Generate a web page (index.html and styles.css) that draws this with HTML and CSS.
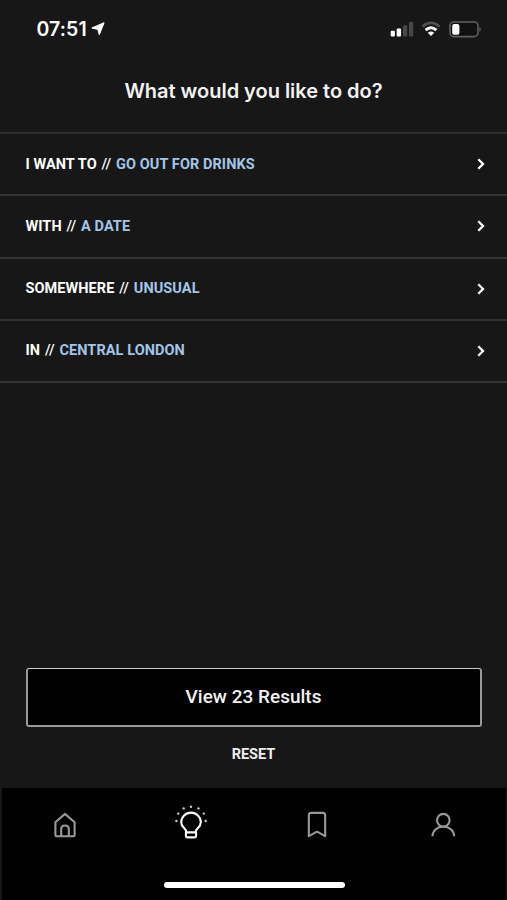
FILE: index.html
```html
<!DOCTYPE html>
<html lang="en">
<head>
<meta charset="utf-8">
<title>What would you like to do?</title>
<link rel="stylesheet" href="styles.css">
</head>
<body>
<div class="screen">
  <header class="status">
    <div class="clock"><span class="time">07:51</span>
      <svg class="arrow" width="14" height="14" viewBox="0 0 14 14"><path d="M13.1.7 8.3 12.8 6.8 7.4 .8 6Z" fill="#fff" stroke="#fff" stroke-width="1" stroke-linejoin="round"/></svg>
    </div>
    <div class="indicators">
      <svg width="24" height="16" viewBox="0 0 24 16"><g fill="#fff"><rect x=".7" y="9.8" width="4.2" height="5.7" rx="1"/><rect x="6.7" y="7.4" width="4.4" height="8.1" rx="1"/></g><g fill="#474747"><rect x="13" y="4.2" width="4.2" height="11.3" rx="1"/><rect x="19" y="1" width="4.2" height="14.5" rx="1"/></g></svg>
      <svg class="wifi" width="20" height="16" viewBox="0 0 20 16" fill="none"><path d="M1.5 5.4Q10-1.8 18.5 5.4" stroke="#505050" stroke-width="2.6"/><path d="M4.6 9.1Q10 4.3 15.4 9.1" stroke="#fff" stroke-width="2.8"/><path d="M6.8 11.8Q10 9 13.2 11.8L10 15Z" fill="#fff"/></svg>
      <svg width="33" height="17" viewBox="0 0 33 17"><rect x="1" y="1" width="28" height="14.6" rx="4" fill="#111" stroke="#606060" stroke-width="1.6"/><rect x="3.2" y="3" width="7.2" height="10.8" rx="2" fill="#fff"/><path d="M30.5 6Q33 8.3 30.5 10.7Z" fill="#707070"/></svg>
    </div>
  </header>
  <h1 class="title">What would you like to do?</h1>
  <ul class="filters">
    <li class="row"><span class="label">I WANT TO <span class="slash">//</span> <span class="value">GO OUT FOR DRINKS</span></span><svg class="chevron" viewBox="0 0 8 12"><path d="M1.3 1.3 6 6 1.3 10.7"/></svg></li>
    <li class="row"><span class="label">WITH <span class="slash">//</span> <span class="value">A DATE</span></span><svg class="chevron" viewBox="0 0 8 12"><path d="M1.3 1.3 6 6 1.3 10.7"/></svg></li>
    <li class="row"><span class="label">SOMEWHERE <span class="slash">//</span> <span class="value">UNUSUAL</span></span><svg class="chevron" viewBox="0 0 8 12"><path d="M1.3 1.3 6 6 1.3 10.7"/></svg></li>
    <li class="row"><span class="label">IN <span class="slash">//</span> <span class="value">CENTRAL LONDON</span></span><svg class="chevron" viewBox="0 0 8 12"><path d="M1.3 1.3 6 6 1.3 10.7"/></svg></li>
  </ul>
  <div class="actions">
    <button class="results">View 23 Results</button>
    <button class="reset">RESET</button>
  </div>
  <footer class="dock">
    <nav class="tabs">
      <a class="tab"><svg width="36" height="36" viewBox="0 0 36 36"><path d="M8.4 15.3 18 6.9l9.6 8.4v12.1q0 1.9-1.9 1.9H10.3q-1.9 0-1.9-1.9ZM14.2 29.1v-7q0-3.6 3.8-3.6t3.8 3.6v7"/></svg></a>
      <a class="tab active"><svg width="36" height="36" viewBox="0 0 36 36"><path d="M13.4 25.3C13.4 21.3 8.2 20.6 8.2 15.2a9.8 9.6 0 0 1 19.6 0c0 5.4-5.2 6.1-5.2 10.1M12.9 25.4h10.2v3q0 2-2 2h-6.2q-2 0-2-2Z"/><g class="rays"><circle cx="3.4" cy="14" r="1.2"/><circle cx="5.2" cy="6.6" r="1.2"/><circle cx="10.7" cy="1.4" r="1.2"/><circle cx="18" cy="-.3" r="1.2"/><circle cx="25.5" cy="1.4" r="1.2"/><circle cx="30.8" cy="6.6" r="1.2"/><circle cx="32.7" cy="14" r="1.2"/></g></svg></a>
      <a class="tab"><svg width="36" height="36" viewBox="0 0 36 36"><path d="M9.8 29.2V8.4q0-2.5 2.5-2.5h11.4q2.5 0 2.5 2.5v20.8L18 24.7Z"/></svg></a>
      <a class="tab"><svg width="36" height="36" viewBox="0 0 36 36"><circle cx="18.3" cy="13.2" r="6.3"/><path d="M7.4 29.2C7.8 23.4 12.3 19.6 18.3 19.6S28.8 23.4 29.2 29.2"/></svg></a>
    </nav>
    <div class="home-bar"></div>
  </footer>
</div>
</body>
</html>
```
FILE: styles.css
```css
* { box-sizing: border-box; }
body { margin: 0; background: #171717; color: #fff; font-family: Roboto, sans-serif; }
.screen { width: 507px; height: 900px; display: flex; flex-direction: column; overflow: hidden; }
.status { height: 58px; flex: none; display: flex; justify-content: space-between; align-items: center; padding: 0 25.5px 0 36.5px; }
.clock { display: flex; align-items: center; gap: 4.5px; }
.time { font: 600 19.5px/24px Inter, sans-serif; letter-spacing: .1px; }
.indicators { display: flex; align-items: center; }
.indicators svg { display: block; }
.wifi { margin: 0 8px 0 7px; }
.title { flex: none; height: 74px; margin: 0; text-align: center; font: 600 20px/67px Inter, sans-serif; letter-spacing: -.02px; color: #f3f3f3; white-space: nowrap; }
.filters { flex: none; list-style: none; margin: 0; padding: 0; border-top: 2px solid #2c2c2c; }
.row { height: 62.25px; padding: 0 22px 0 25.5px; display: flex; align-items: center; justify-content: space-between; border-bottom: 2px solid #343434; }
.label { font-size: 14.5px; line-height: 20px; font-weight: 700; white-space: pre; letter-spacing: .07px; padding-top: 1px; }
.slash { font-weight: 500; margin: 0 1.1px; }
.value { color: #a3c5e8; }
.chevron { width: 8px; height: 12px; fill: none; stroke: #fff; stroke-width: 2.3; }
.actions { flex: 1; display: flex; flex-direction: column; justify-content: flex-end; align-items: center; padding: 0 25px 17px 26px; }
.results { width: 100%; height: 59px; padding: 0 1px 0 0; background: #000; border: 2px solid #999; border-top: 1px solid #c8c8c8; border-radius: 3px; color: #f4f4f4; font: 500 19px/24px Roboto, sans-serif; }
.reset { height: 32px; margin-top: 12px; padding: 0 1px 0 0; background: none; border: 0; color: #eee; font: 700 14.5px/32px Roboto, sans-serif; }
.dock { flex: none; height: 112px; margin: 0 1px 0 2px; background: #000; display: flex; flex-direction: column; align-items: center; }
.tabs { width: 100%; height: 73px; display: grid; grid-template-columns: repeat(4, 1fr); }
.tab { display: flex; justify-content: center; align-items: center; color: #999; }
.tab svg { overflow: visible; fill: none; stroke: currentColor; stroke-width: 2.1; stroke-linejoin: round; }
.tab.active { color: #fff; }
.tab .rays { fill: #ccc; stroke: none; }
.home-bar { width: 181px; height: 6px; margin-top: 21px; border-radius: 3px; background: #fff; }
```
